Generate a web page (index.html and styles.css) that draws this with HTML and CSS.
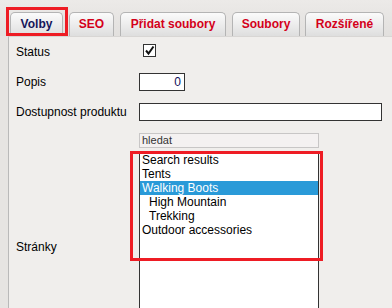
FILE: index.html
```html
<!DOCTYPE html>
<html lang="cs">
<head>
    <meta charset="UTF-8">
    <title>Produkt</title>
    <link rel="stylesheet" href="styles.css">
</head>
<body>
<div class="tabs">
    <div class="tab tab-active">Volby<span class="mark mark-tab"></span></div>
    <div class="tab">SEO</div>
    <div class="tab">Přidat soubory</div>
    <div class="tab">Soubory</div>
    <div class="tab">Rozšířené</div>
</div>
<div class="panel">
    <div class="row">
        <div class="label">Status</div>
        <span class="check">
            <svg width="11" height="11" viewBox="0 0 11 11"><path d="M2 5.5 L4.5 8.5 L9.5 1.5" fill="none" stroke="#111" stroke-width="2"/></svg>
        </span>
    </div>
    <div class="row">
        <div class="label">Popis</div>
        <div class="input input-small">0</div>
    </div>
    <div class="row">
        <div class="label">Dostupnost produktu</div>
        <div class="input input-wide"></div>
    </div>
    <div class="row row-pages">
        <div class="label">Stránky</div>
        <div class="picker">
            <div class="search">hledat</div>
            <div class="list">
                <div class="opt">Search results</div>
                <div class="opt">Tents</div>
                <div class="opt opt-sel">Walking Boots</div>
                <div class="opt opt-sub">High Mountain</div>
                <div class="opt opt-sub">Trekking</div>
                <div class="opt">Outdoor accessories</div>
                <span class="mark mark-list"></span>
            </div>
        </div>
    </div>
</div>
</body>
</html>
```

FILE: styles.css
```css
body {
    margin: 0;
    background: #e6e4e2;
    font-family: "Liberation Sans", Arial, sans-serif;
    font-size: 12px;
    color: #000;
}
.tabs {
    display: flex;
    gap: 6px;
    padding: 12px 0 0 10px;
    height: 24px;
    background: linear-gradient(#eceae8, #e2e0de);
}
.tab {
    position: relative;
    box-sizing: border-box;
    height: 24px;
    line-height: 23px;
    text-align: center;
    border: 1px solid #b4b4b4;
    border-bottom: 0;
    border-radius: 5px 5px 0 0;
    background: linear-gradient(#fbfbfb, #dedede);
    color: #d4001a;
    font-weight: bold;
}
.tab:nth-child(1) { width: 53px; }
.tab:nth-child(2) { width: 45px; }
.tab:nth-child(3) { width: 106px; }
.tab:nth-child(4) { width: 68px; }
.tab:nth-child(5) { width: 79px; margin-left: -1px; }
.tab-active {
    color: #16165a;
}
.mark {
    position: absolute;
    border: 3px solid #ee1c24;
    box-sizing: border-box;
}
.mark-tab {
    left: -5px;
    top: -6px;
    width: 62px;
    height: 29px;
}
.panel {
    margin-left: 8px;
    border-left: 1px solid #b9b9b9;
    border-top: 1px solid #d8d6d4;
    background: #f0eeec;
    height: 400px;
}
.row {
    display: flex;
    align-items: center;
    height: 30px;
}
.label {
    box-sizing: border-box;
    width: 130px;
    padding-left: 7px;
    flex: none;
}
.check {
    display: flex;
    align-items: center;
    justify-content: center;
    width: 11px;
    height: 11px;
    border: 1px solid #333;
    background: #fff;
    margin: -3px 0 0 4px;
}
.input {
    box-sizing: border-box;
    height: 18px;
    border: 1px solid #333;
    background: #fff;
    line-height: 16px;
    padding: 0 3px;
}
.input-small {
    width: 46px;
    text-align: right;
    color: #10105a;
}
.input-wide {
    width: 243px;
}
.row-pages {
    height: auto;
    margin-top: 6px;
}
.picker {
    width: 180px;
}
.search {
    box-sizing: border-box;
    height: 15px;
    border: 1px solid #c8c6c6;
    background: #f4f1f1;
    color: #333;
    font-size: 11px;
    line-height: 13px;
    padding-left: 2px;
    margin-bottom: 3px;
}
.list {
    position: relative;
    box-sizing: border-box;
    height: 210px;
    border: 1px solid #333;
    background: #fff;
    padding-top: 1px;
}
.opt {
    height: 14px;
    line-height: 14px;
    padding-left: 2px;
}
.opt-sub {
    padding-left: 9px;
}
.opt-sel {
    background: #2a9ad8;
    color: #fff;
}
.mark-list {
    left: -10px;
    top: -1px;
    width: 193px;
    height: 110px;
}
```
